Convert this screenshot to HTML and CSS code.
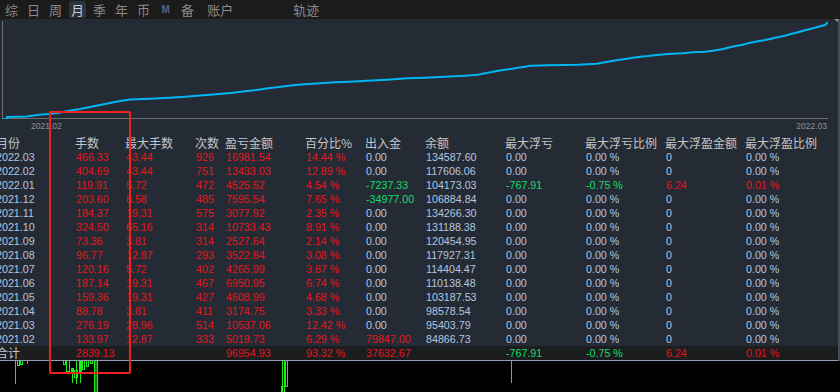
FILE: index.html
```html
<!DOCTYPE html>
<html lang="zh">
<head>
<meta charset="utf-8">
<title>月报</title>
<link rel="stylesheet" href="styles.css">
</head>
<body>
<div class="app">
  <nav class="tabs">
    <span class="tab">综</span>
    <span class="tab">日</span>
    <span class="tab">周</span>
    <span class="tab on">月</span>
    <span class="tab">季</span>
    <span class="tab">年</span>
    <span class="tab">币</span>
    <span class="tab m">M</span>
    <span class="tab">备</span>
    <span class="tab acct">账户</span>
    <span class="tab track">轨迹</span>
  </nav>

  <div class="panel">
    <div class="chart">
      <svg class="plot" width="838" height="100" viewBox="0 19 838 100">
        <line x1="2.5" y1="21" x2="2.5" y2="119" stroke="#6e6e6e" stroke-width="1"/>
        <line x1="2" y1="118.5" x2="828" y2="118.5" stroke="#6e6e6e" stroke-width="1"/>
        <polygon points="834,19 838,16 838,22" fill="#9a9a9a"/>
        <polyline fill="none" stroke="#00b6f2" stroke-width="2" stroke-linejoin="miter"
          points="2,119.5 7,119 7,117 27,116.5 37,115 48,114 58,113 68,111 80,109 90,107 100,105 110,103 120,101 130,99.5 150,98.7 170,97.7 185,96.7 197,95.7 210,94.7 222,93.7 233,92.7 243,91.5 252,90.5 260,89.5 268,88.3 277,87.3 285,86.3 293,85.3 305,84.3 320,83.3 335,82.3 350,81.7 367,80.7 387,79.7 407,78.3 425,77.7 445,76.7 465,75.7 478,74.7 485,73.3 492,72 498,70.7 505,69.7 512,68.7 518,67.7 525,66.7 530,65.7 548,65.3 578,64.7 597,63.7 605,62.3 612,61 618,60 627,58.7 633,57.7 640,56.7 648,56 657,55 668,54 682,53.3 693,52.3 705,51.7 713,50.7 722,49.3 727,48 732,46.7 737,45.7 743,44.7 748,43.3 753,42.3 758,41.3 765,40 770,39 775,37.7 780,36.7 785,35.7 790,34.3 795,33 800,31.7 805,30.3 810,29 815,27.7 820,26.3 825,25 827,23 827,22"/>
      </svg>
      <div class="xlabels"><span>2021.02</span><span>2022.03</span></div>
    </div>

    <div class="table">
      <div class="row head">
        <span>月份</span><span>手数</span><span>最大手数</span><span>次数</span><span>盈亏金额</span><span>百分比%</span><span>出入金</span><span>余额</span><span>最大浮亏</span><span>最大浮亏比例</span><span>最大浮盈金额</span><span>最大浮盈比例</span>
      </div>
      <div class="row"><span>2022.03</span><span class="r">466.33</span><span class="r">43.44</span><span class="r">926</span><span class="r">16981.54</span><span class="r">14.44 %</span><span>0.00</span><span>134587.60</span><span>0.00</span><span>0.00 %</span><span>0</span><span>0.00 %</span></div>
      <div class="row"><span>2022.02</span><span class="r">404.69</span><span class="r">43.44</span><span class="r">751</span><span class="r">13433.03</span><span class="r">12.89 %</span><span>0.00</span><span>117606.06</span><span>0.00</span><span>0.00 %</span><span>0</span><span>0.00 %</span></div>
      <div class="row"><span>2022.01</span><span class="r">119.91</span><span class="r">5.72</span><span class="r">472</span><span class="r">4525.52</span><span class="r">4.54 %</span><span class="g">-7237.33</span><span>104173.03</span><span class="g">-767.91</span><span class="g">-0.75 %</span><span class="r">6.24</span><span class="r">0.01 %</span></div>
      <div class="row"><span>2021.12</span><span class="r">203.60</span><span class="r">8.58</span><span class="r">485</span><span class="r">7595.54</span><span class="r">7.65 %</span><span class="g">-34977.00</span><span>106884.84</span><span>0.00</span><span>0.00 %</span><span>0</span><span>0.00 %</span></div>
      <div class="row"><span>2021.11</span><span class="r">184.37</span><span class="r">19.31</span><span class="r">575</span><span class="r">3077.92</span><span class="r">2.35 %</span><span>0.00</span><span>134266.30</span><span>0.00</span><span>0.00 %</span><span>0</span><span>0.00 %</span></div>
      <div class="row"><span>2021.10</span><span class="r">324.50</span><span class="r">65.16</span><span class="r">314</span><span class="r">10733.43</span><span class="r">8.91 %</span><span>0.00</span><span>131188.38</span><span>0.00</span><span>0.00 %</span><span>0</span><span>0.00 %</span></div>
      <div class="row"><span>2021.09</span><span class="r">73.36</span><span class="r">3.81</span><span class="r">314</span><span class="r">2527.64</span><span class="r">2.14 %</span><span>0.00</span><span>120454.95</span><span>0.00</span><span>0.00 %</span><span>0</span><span>0.00 %</span></div>
      <div class="row"><span>2021.08</span><span class="r">96.77</span><span class="r">12.87</span><span class="r">293</span><span class="r">3522.84</span><span class="r">3.08 %</span><span>0.00</span><span>117927.31</span><span>0.00</span><span>0.00 %</span><span>0</span><span>0.00 %</span></div>
      <div class="row"><span>2021.07</span><span class="r">120.16</span><span class="r">5.72</span><span class="r">402</span><span class="r">4265.99</span><span class="r">3.87 %</span><span>0.00</span><span>114404.47</span><span>0.00</span><span>0.00 %</span><span>0</span><span>0.00 %</span></div>
      <div class="row"><span>2021.06</span><span class="r">187.14</span><span class="r">19.31</span><span class="r">467</span><span class="r">6950.95</span><span class="r">6.74 %</span><span>0.00</span><span>110138.48</span><span>0.00</span><span>0.00 %</span><span>0</span><span>0.00 %</span></div>
      <div class="row"><span>2021.05</span><span class="r">159.36</span><span class="r">19.31</span><span class="r">427</span><span class="r">4608.99</span><span class="r">4.68 %</span><span>0.00</span><span>103187.53</span><span>0.00</span><span>0.00 %</span><span>0</span><span>0.00 %</span></div>
      <div class="row"><span>2021.04</span><span class="r">88.78</span><span class="r">3.81</span><span class="r">411</span><span class="r">3174.75</span><span class="r">3.33 %</span><span>0.00</span><span>98578.54</span><span>0.00</span><span>0.00 %</span><span>0</span><span>0.00 %</span></div>
      <div class="row"><span>2021.03</span><span class="r">276.19</span><span class="r">28.96</span><span class="r">514</span><span class="r">10537.06</span><span class="r">12.42 %</span><span>0.00</span><span>95403.79</span><span>0.00</span><span>0.00 %</span><span>0</span><span>0.00 %</span></div>
      <div class="row"><span>2021.02</span><span class="r">133.97</span><span class="r">12.87</span><span class="r">333</span><span class="r">5019.73</span><span class="r">6.29 %</span><span class="r">79847.00</span><span>84866.73</span><span>0.00</span><span>0.00 %</span><span>0</span><span>0.00 %</span></div>
      <div class="row total"><span class="lbl">合计</span><span class="r">2839.13</span><span></span><span></span><span class="r">96954.93</span><span class="r">93.32 %</span><span class="r">37632.67</span><span></span><span class="g">-767.91</span><span class="g">-0.75 %</span><span class="r">6.24</span><span class="r">0.01 %</span></div>
    </div>
  </div>

  <div class="bottom">
    <svg width="840" height="31" viewBox="0 361 840 31" fill="none" stroke="#19f019" stroke-width="1">
      <line x1="15.5" y1="361" x2="15.5" y2="384"/>
      <rect x="17.5" y="360.5" width="2" height="5"/>
      <rect x="20.5" y="360.5" width="2" height="4"/>
      <line x1="27.5" y1="361" x2="27.5" y2="364"/>
      <rect x="63.5" y="360.5" width="2" height="4"/>
      <rect x="66.5" y="360.5" width="3" height="11"/>
      <line x1="72.5" y1="368" x2="72.5" y2="383"/>
      <rect x="71.5" y="368.5" width="2" height="4"/>
      <line x1="76.5" y1="361" x2="76.5" y2="384"/>
      <rect x="74.5" y="370.5" width="3" height="7"/>
      <line x1="80.5" y1="361" x2="80.5" y2="383"/>
      <rect x="79.5" y="360.5" width="2" height="13"/>
      <rect x="82.5" y="360.5" width="2" height="9"/>
      <rect x="86.5" y="360.5" width="2" height="6"/>
      <rect x="90.5" y="360.5" width="2" height="3"/>
      <rect x="94.5" y="360.5" width="3" height="32"/>
      <line x1="96" y1="361" x2="96" y2="392" stroke-width="1"/>
      <rect x="282.5" y="360.5" width="2" height="33"/>
      <rect x="285.5" y="360.5" width="2" height="26"/>
      <rect x="281.5" y="386.5" width="3" height="6"/>
      <line x1="511.5" y1="361" x2="511.5" y2="383"/>
    </svg>
  </div>

  <div class="mark"></div>
</div>
</body>
</html>
```

FILE: styles.css
```css
* { box-sizing: border-box; }

html, body {
  margin: 0;
  padding: 0;
  background: #000;
}

.app {
  position: relative;
  width: 840px;
  height: 392px;
  overflow: hidden;
  background: #000;
  font-family: "Liberation Sans", "Noto Sans CJK SC", sans-serif;
}

/* ---------- tabs ---------- */
.tabs {
  display: flex;
  align-items: center;
  gap: 5px;
  height: 19px;
  padding-left: 3px;
  background: #1b1b1b;
  font-family: "Noto Sans CJK SC", sans-serif;
  font-size: 13px;
  color: #8a8a8a;
}

.tab {
  height: 17px;
  line-height: 17px;
  padding: 0 2px;
  border-radius: 2px;
}

.tab.on {
  background: #2b333e;
  color: #c6ceda;
}

.tab.m {
  width: 17px;
  text-align: center;
  font-family: "Liberation Sans", sans-serif;
  font-weight: bold;
  font-size: 10px;
  color: #56668a;
}

.tab.acct { margin-left: 4px; }
.tab.track { margin-left: 51px; }

/* ---------- panel ---------- */
.panel {
  background: #252b34;
  border-right: 2px solid #464c55;
  overflow: hidden;
}

.chart {
  display: flex;
  flex-direction: column;
}

.plot { display: block; }

.xlabels {
  display: flex;
  justify-content: space-between;
  height: 17px;
  padding: 0 11px 0 31px;
  font-size: 8.5px;
  line-height: 14px;
  color: #8a929c;
}

/* ---------- table ---------- */
.table {
  display: flex;
  flex-direction: column;
}

.row {
  display: grid;
  grid-template-columns: 79px 50px 70px 30px 80px 60px 60px 80px 80px 80px 80px 80px;
  height: 14px;
  margin-left: -4px;
  font-size: 10.7px;
  line-height: 14px;
  color: #b2c7e0;
  white-space: nowrap;
}

.row span + span { padding-left: 1px; }

.row.head {
  font-family: "Noto Sans CJK SC", sans-serif;
  font-size: 12px;
  color: #c2c6cc;
}

.row.head span { padding-left: 0; }

.row.total {
  background: #1c1d1f;
  margin-left: 0;
  padding-left: 0;
  border-bottom: 1px solid #90a0b4;
  height: 15px;
  grid-template-columns: 75px 50px 70px 30px 80px 60px 60px 80px 80px 80px 80px 80px;
}

.row.total .lbl {
  font-family: "Noto Sans CJK SC", sans-serif;
  font-size: 12px;
  color: #c2c6cc;
  margin-left: -4px;
}

.r { color: #e8141c; }
.g { color: #12dc6a; }

/* ---------- bottom strip ---------- */
.bottom {
  height: 31px;
  background: #000;
}

.bottom svg { display: block; }

/* ---------- annotation overlay ---------- */
.mark {
  position: absolute;
  left: 49px;
  top: 111px;
  width: 82px;
  height: 263px;
  border: 2.5px solid #f0221c;
  border-radius: 2px;
}
```
